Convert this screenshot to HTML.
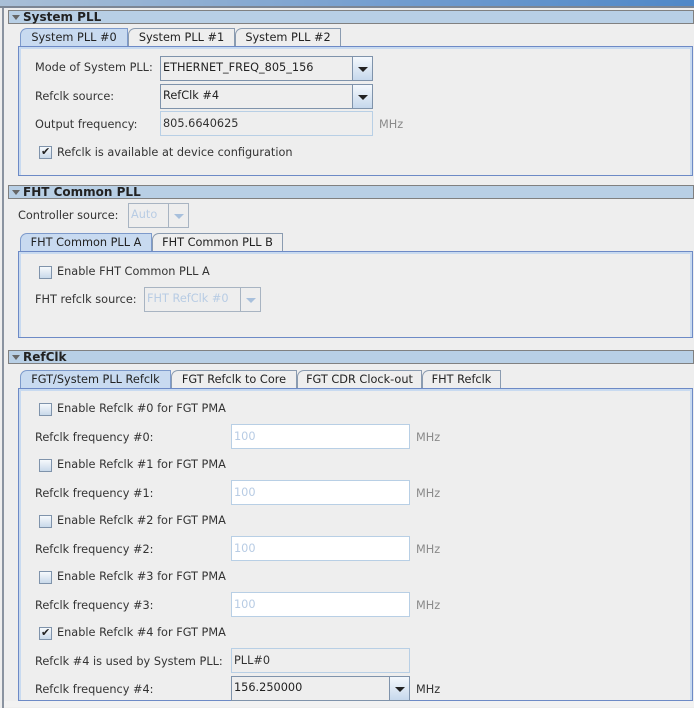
<!DOCTYPE html>
<html><head><meta charset="utf-8"><style>
*{box-sizing:border-box;margin:0;padding:0}
body{width:694px;height:707px;background:#eeeeee;position:relative;overflow:hidden;font-family:"DejaVu Sans","Liberation Sans",sans-serif;font-size:11.3px;color:#333}
.a{position:absolute;white-space:nowrap}
.topbar{left:0;top:0;width:694px;height:6px;background:linear-gradient(90deg,#a9bfd6,#6f9bcf 60%,#4f88c8)}
.topline{left:0;top:6px;width:694px;height:2px;background:#7c8694}
.lborder{left:2px;top:8px;width:2px;height:700px;background:#8a93a0}
.hdr{left:8px;width:686px;height:14px;background:#b8cfe5;border:1px solid #808080;font-weight:bold;font-size:12px;color:#222;padding-left:14px;line-height:12px}
.hdr:before{content:"";position:absolute;left:3px;top:4px;border-left:4px solid transparent;border-right:4px solid transparent;border-top:5px solid #666}
.tab{height:18px;border:1px solid #8a9bb0;border-bottom:none;border-top-left-radius:7px;background:#eeeeee;text-align:center;line-height:17px;color:#222}
.tab.sel{background:#c8daf0;height:19px;border-color:#7d9acb}
.panel{left:18px;width:675px;border:1px solid #6d8ac6;box-shadow:inset 2px 2px 0 #c8daf0,inset -2px 0 0 #c8daf0}
.combo{height:25px;border:1px solid #7f93ab;background:#eeeeee;padding-left:2px;line-height:22px;color:#222}
.combo .btn{position:absolute;right:-1px;top:-1px;width:21px;height:25px;border:1px solid #7f93ab;background:linear-gradient(#f4f8fc,#c6d8ec)}
.combo .btn:after{content:"";position:absolute;left:5px;top:10px;border-left:5px solid transparent;border-right:5px solid transparent;border-top:5px solid #222}
.combo.dis{border-color:#a8b4c2;color:#b8cce4}
.combo.dis .btn{border-color:#a8b4c2;background:#eeeeee}
.combo.dis .btn:after{border-top-color:#a8c0dc}
.field{height:25px;border:1px solid #b8cfe5;background:#eeeeee;padding-left:2px;line-height:23px;color:#333}
.field.w{background:#fff;color:#b8cce4}
.cb{width:13px;height:13px;border:1px solid #7f93ab;background:linear-gradient(#f6f9fc,#c9d9ea)}
.cb.on:after{content:"✔";position:absolute;left:1px;top:-2px;font-size:11px;color:#222}
.mhz{color:#8a8a8a}
</style></head><body>
<div class="a topbar"></div><div class="a topline"></div><div class="a lborder"></div>

<div class="a hdr" style="top:10px">System PLL</div>
<div class="a tab sel" style="left:20px;top:28px;width:108px">System PLL #0</div>
<div class="a tab" style="left:128px;top:28px;width:107px">System PLL #1</div>
<div class="a tab" style="left:235px;top:28px;width:106px">System PLL #2</div>
<div class="a panel" style="top:46px;height:130px"></div>
<div class="a" style="left:35px;top:61px">Mode of System PLL:</div>
<div class="a combo" style="left:160px;top:56px;width:213px">ETHERNET_FREQ_805_156<div class="btn"></div></div>
<div class="a" style="left:35px;top:90px">Refclk source:</div>
<div class="a combo" style="left:160px;top:84px;width:213px">RefClk #4<div class="btn"></div></div>
<div class="a" style="left:35px;top:118px">Output frequency:</div>
<div class="a field" style="left:160px;top:111px;width:213px">805.6640625</div>
<div class="a mhz" style="left:379px;top:118px">MHz</div>
<div class="a cb on" style="left:39px;top:146px"></div>
<div class="a" style="left:57px;top:146px">Refclk is available at device configuration</div>

<div class="a hdr" style="top:185px">FHT Common PLL</div>
<div class="a" style="left:18px;top:209px">Controller source:</div>
<div class="a combo dis" style="left:128px;top:203px;width:61px">Auto<div class="btn"></div></div>
<div class="a tab sel" style="left:20px;top:233px;width:132px">FHT Common PLL A</div>
<div class="a tab" style="left:152px;top:233px;width:131px">FHT Common PLL B</div>
<div class="a panel" style="top:251px;height:87px"></div>
<div class="a cb" style="left:39px;top:266px"></div>
<div class="a" style="left:57px;top:265px">Enable FHT Common PLL A</div>
<div class="a" style="left:35px;top:293px">FHT refclk source:</div>
<div class="a combo dis" style="left:144px;top:287px;width:117px">FHT RefClk #0<div class="btn"></div></div>

<div class="a hdr" style="top:350px">RefClk</div>
<div class="a tab sel" style="left:20px;top:370px;width:151px">FGT/System PLL Refclk</div>
<div class="a tab" style="left:171px;top:370px;width:126px">FGT Refclk to Core</div>
<div class="a tab" style="left:297px;top:370px;width:125px">FGT CDR Clock-out</div>
<div class="a tab" style="left:422px;top:370px;width:79px">FHT Refclk</div>
<div class="a panel" style="top:388px;height:313px"></div>

<div class="a cb" style="left:39px;top:403px"></div><div class="a" style="left:57px;top:402px">Enable Refclk #0 for FGT PMA</div>
<div class="a" style="left:35px;top:431px">Refclk frequency #0:</div><div class="a field w" style="left:231px;top:424px;width:179px">100</div><div class="a mhz" style="left:416px;top:431px">MHz</div>
<div class="a cb" style="left:39px;top:459px"></div><div class="a" style="left:57px;top:458px">Enable Refclk #1 for FGT PMA</div>
<div class="a" style="left:35px;top:487px">Refclk frequency #1:</div><div class="a field w" style="left:231px;top:480px;width:179px">100</div><div class="a mhz" style="left:416px;top:487px">MHz</div>
<div class="a cb" style="left:39px;top:515px"></div><div class="a" style="left:57px;top:514px">Enable Refclk #2 for FGT PMA</div>
<div class="a" style="left:35px;top:543px">Refclk frequency #2:</div><div class="a field w" style="left:231px;top:536px;width:179px">100</div><div class="a mhz" style="left:416px;top:543px">MHz</div>
<div class="a cb" style="left:39px;top:571px"></div><div class="a" style="left:57px;top:570px">Enable Refclk #3 for FGT PMA</div>
<div class="a" style="left:35px;top:599px">Refclk frequency #3:</div><div class="a field w" style="left:231px;top:592px;width:179px">100</div><div class="a mhz" style="left:416px;top:599px">MHz</div>
<div class="a cb on" style="left:39px;top:627px"></div><div class="a" style="left:57px;top:626px">Enable Refclk #4 for FGT PMA</div>
<div class="a" style="left:35px;top:655px">Refclk #4 is used by System PLL:</div><div class="a field" style="left:231px;top:648px;width:179px">PLL#0</div>
<div class="a" style="left:35px;top:683px">Refclk frequency #4:</div><div class="a combo" style="left:231px;top:676px;width:179px">156.250000<div class="btn"></div></div><div class="a" style="left:416px;top:683px">MHz</div>
<div class="a" style="left:4px;top:701px;width:690px;height:6px;background:#f2f2f2"></div>
</body></html>
